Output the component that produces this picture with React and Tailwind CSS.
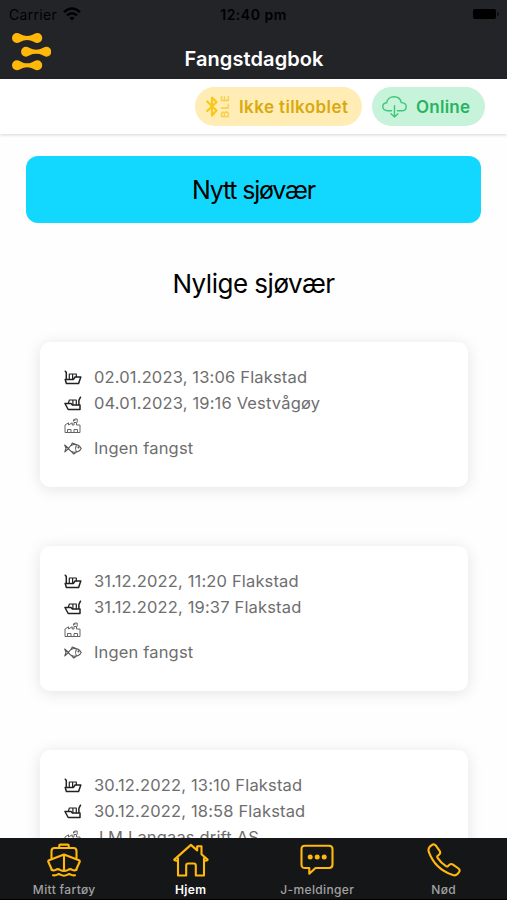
import React from 'react';

const trips = [
  { id: 1, departure: '02.01.2023, 13:06 Flakstad', arrival: '04.01.2023, 19:16 Vestvågøy', buyer: '', fish: 'Ingen fangst' },
  { id: 2, departure: '31.12.2022, 11:20 Flakstad', arrival: '31.12.2022, 19:37 Flakstad', buyer: '', fish: 'Ingen fangst' },
  { id: 3, departure: '30.12.2022, 13:10 Flakstad', arrival: '30.12.2022, 18:58 Flakstad', buyer: 'J.M.Langaas drift AS', fish: '' },
];

function Logo() {
  return (
    <svg className="w-[39px] h-[38px]" viewBox="0 0 40 38" preserveAspectRatio="none" fill="#ffb70a">
      <path id="link" d="M5 0C7.500 0 9 1.800 12 2.600Q15.500 3.400 19 2.600C22 1.800 23.500 0 26 0A5 5 0 0 1 26 10C23.500 10 22 8.200 19 7.400Q15.500 6.600 12 7.400C9 8.200 7.500 10 5 10A5 5 0 0 1 5 0Z" />
      <use href="#link" x="9.300" y="13.700" />
      <use href="#link" x="0" y="27.300" />
    </svg>
  );
}

function WifiIcon() {
  return (
    <svg className="w-[18px] h-[14px]" viewBox="0 0 18 14" fill="none" stroke="#000" strokeWidth="2.500">
      <path d="M1 5.200Q9-2.200 17 5.200" />
      <path d="M4 8.400Q9 4 14 8.400" />
      <path d="M6.400 10.900Q9 8.700 11.600 10.900L9 13.500Z" fill="#000" stroke="none" />
    </svg>
  );
}

function BluetoothIcon() {
  return (
    <svg className="w-[12px] h-[23px]" viewBox="0 0 12 23" fill="none" stroke="#f8c81c" strokeWidth="2.200" strokeLinejoin="round" strokeLinecap="round">
      <path d="M1.200 6.500L10.500 15.500L6 20.500V2.500L10.500 7L1.200 16" />
    </svg>
  );
}

function CloudIcon() {
  return (
    <svg className="w-[25px] h-[22px]" viewBox="0 0 25 22" fill="none" stroke="#3cc878" strokeWidth="1.400" strokeLinecap="round" strokeLinejoin="round">
      <path d="M9.500 14.800H5.500C2.700 14.800 .8 13 .8 10.600C.8 8.400 2.400 6.900 4.700 6.700C5.200 3.100 8.300 .8 12 .8C15.800 .8 18.600 3.100 19.300 6.600C22.200 6.700 24.200 8.300 24.200 10.700C24.200 13.200 22.200 14.800 19.600 14.800H15.500" />
      <path d="M12.500 9.800V21M9 17.800L12.500 21L16 17.800" />
    </svg>
  );
}

function DepartIcon() {
  return (
    <svg className="w-[18px] h-[15px]" viewBox="0 0 18 15" fill="none" stroke="#222" strokeWidth="1.200" strokeLinejoin="round" strokeLinecap="round">
      <path d="M1.300 1.200L2.300 2.500V9.500M1.200 9.500H9.300L11 7H16.800L14.600 13.500H2.400L1.200 9.500Z" strokeWidth="1.500" />
      <path d="M5.300 9V4H12.300V7M8.600 4V9" />
    </svg>
  );
}

function ArriveIcon() {
  return (
    <svg className="w-[18px] h-[15px]" viewBox="0 0 18 15" fill="none" stroke="#222" strokeWidth="1.200" strokeLinejoin="round" strokeLinecap="round">
      <path d="M1 7.500H7L8.600 9.100H16V13.500H4.200L1 7.500ZM14.900 9.100V4.300L16.500 1.200" strokeWidth="1.500" />
      <path d="M4.300 7.300L5.400 4H12.300V8.800M8.900 4V8.800" />
    </svg>
  );
}

function FactoryIcon() {
  return (
    <svg className="w-[17px] h-[16px]" viewBox="0 0 17 16" fill="none" stroke="#666" strokeWidth="1" strokeLinejoin="round">
      <path d="M1 14.500V7L4.500 4.800V7L8.200 4.800V7H10V4.500H12.500V7H16V14.500H1Z" />
      <path d="M9.500 3.500V1.700H11M10.800 3V1H13.200V4.500M3.500 14.500V11.500H7V14.500M10 14.500V11.500H13.500V14.500" />
    </svg>
  );
}

function FishIcon() {
  return (
    <svg className="w-[18px] h-[13px]" viewBox="0 0 18 13" fill="none" stroke="#555" strokeWidth="1.100" strokeLinejoin="round" strokeLinecap="round">
      <path d="M4.500 6.500C7 1.500 14.500 1 17.200 6.500C14.500 11.600 7 11.300 4.500 6.500L.8 9.900L2 6.300L.7 3L4.500 6.500Z" />
      <path d="M7.300 3L8.300 1.100L11.500 2.300M8 10.200L9.700 12L11.500 10.800M12.300 3.200Q10.800 6.400 12.300 9.800" />
      <circle cx="14.500" cy="5.400" r=".5" fill="#555" />
    </svg>
  );
}

function ShipIcon() {
  return (
    <svg className="w-[34px] h-[34px]" viewBox="0 0 34 34" fill="none" stroke="#ffb80e" strokeWidth="2.100" strokeLinejoin="round" strokeLinecap="round">
      <path d="M12.300 4.800V2.600Q12.300 1.600 13.300 1.600H20.700Q21.700 1.600 21.700 2.600V4.800M4.500 15V8Q4.500 5 7.500 5H26.500Q29.500 5 29.500 8V15" />
      <path d="M5 27L1.300 18.800Q1 17.600 2 17.200L17 11.500L32 17.200Q33 17.600 32.700 18.800L29 27" />
      <path d="M17 12V26.500M4.500 26.800Q6.500 28 8.700 26.800Q10.800 25.400 13 26.800Q17 29 21 26.800Q23.200 25.400 25.300 26.800Q27.500 28 29.500 26.800" />
      <path d="M6 32.200Q8.700 32.700 10.500 31.500Q12 30.700 13.500 31.700Q17 33.700 20.500 31.700Q22 30.700 23.500 31.500Q25.300 32.700 28 32.200" />
    </svg>
  );
}

function HomeIcon() {
  return (
    <svg className="w-[36px] h-[34px]" viewBox="0 0 36 34" fill="none" stroke="#ffb80e" strokeWidth="2.100" strokeLinejoin="round">
      <path d="M5 14.500V32.500H13.200V22.500Q13.200 20.500 15.200 20.500H20.800Q22.800 20.500 22.800 22.500V32.500H31V14.500" />
      <path d="M5 18L1.500 17.300L1.300 16.600L17.900 1.900L24.200 7.400V3.200H28.500V11.300L34.600 16.600L34.300 17.300L31 18" />
    </svg>
  );
}

function MessageIcon() {
  return (
    <svg className="w-[34px] h-[32px]" viewBox="0 0 34 32" fill="none" stroke="#ffb80e" strokeWidth="2.100" strokeLinejoin="round">
      <path d="M5 1.700H29Q32.500 1.700 32.500 5.200V20.500Q32.500 24 29 24H15.500L9.300 29.700V24H5Q1.500 24 1.500 20.500V5.200Q1.500 1.700 5 1.700Z" />
      <g fill="#ffb80e" stroke="none">
        <circle cx="10.200" cy="13" r="2.500" />
        <circle cx="17.200" cy="13" r="2.500" />
        <circle cx="24.200" cy="13" r="2.500" />
      </g>
    </svg>
  );
}

function PhoneIcon() {
  return (
    <svg className="w-[34px] h-[34px]" viewBox="0 0 34 34" fill="none" stroke="#ffb80e" strokeWidth="2.100" strokeLinejoin="round">
      <path d="M2.800 3.700L5.500 1.600Q7.500 .9 8.900 2.700L12.800 8.200Q13.900 10.200 12 11.700L10.500 13Q9.900 13.800 10.600 14.900Q14 20 19 23.200Q20.100 23.900 20.900 23.200L22.700 21.500Q24.200 20.500 26 21.600L31.500 25.500Q33.300 27 32.200 28.800L30.200 31.300Q28.700 32.900 25.900 32.100Q8 26.300 1.700 8.700Q1 5.500 2.800 3.700Z" />
    </svg>
  );
}

function TripRow({ icon, text, height }) {
  return (
    <div className={`flex items-center ${height}`}>
      <div className="w-[30px] flex shrink-0 items-center pt-px">{icon}</div>
      <span className="text-[16.500px] leading-5 tracking-[0.160px] text-[#6e6e6e]">{text}</span>
    </div>
  );
}

function TripCard({ trip }) {
  return (
    <div className="h-[145px] shrink-0 rounded-[10px] bg-white pt-[22px] pl-6 shadow-[0_2px_16px_rgba(0,0,0,0.110)]">
      <TripRow icon={<DepartIcon />} text={trip.departure} height="h-[26px]" />
      <TripRow icon={<ArriveIcon />} text={trip.arrival} height="h-[26px]" />
      <TripRow icon={<FactoryIcon />} text={trip.buyer} height={trip.buyer ? 'h-[26px]' : 'h-[19px]'} />
      <TripRow icon={<FishIcon />} text={trip.fish} height="h-[26px]" />
    </div>
  );
}

const tabs = [
  { label: 'Mitt fartøy', icon: <ShipIcon /> },
  { label: 'Hjem', icon: <HomeIcon />, active: true },
  { label: 'J-meldinger', icon: <MessageIcon /> },
  { label: 'Nød', icon: <PhoneIcon /> },
];

export default function App() {
  return (
    <div className="flex h-screen w-full flex-col overflow-hidden bg-white font-['Inter',sans-serif]">
      {/* Header */}
      <header className="flex h-[79px] shrink-0 flex-col bg-[#232428]">
        <div className="grid h-[28px] grid-cols-3 items-center text-black">
          <div className="flex items-center gap-[6px] pl-[9px]">
            <span className="text-[14px] tracking-[0.300px]">Carrier</span>
            <WifiIcon />
          </div>
          <span className="text-center text-[14px] font-semibold tracking-[0.500px]">12:40 pm</span>
          <div className="flex items-center justify-end gap-px pr-[8px]">
            <div className="h-[10px] w-[23px] rounded-[2px] bg-black" />
            <div className="h-1 w-[2px] rounded-r bg-black/60" />
          </div>
        </div>
        <div className="grid h-[51px] grid-cols-[100px_1fr_100px] items-start">
          <div className="pt-[5px] pl-[12px]"><Logo /></div>
          <h1 className="pt-[17px] pl-px text-center text-[20px] leading-7 font-semibold tracking-[0.100px] text-white">Fangstdagbok</h1>
        </div>
      </header>

      {/* Connection status */}
      <div className="z-10 flex h-[55px] shrink-0 items-center justify-end gap-[10px] bg-white pr-[22px] shadow-[0_1px_3px_rgba(0,0,0,0.160)]">
        <div className="flex h-[39px] w-[167px] items-center rounded-full bg-[#ffedb5] pl-[11px]">
          <BluetoothIcon />
          <span className="ml-[1px] w-[12px] rotate-180 text-center text-[11px] leading-3 font-semibold tracking-[1.300px] text-[#f8cf45] [writing-mode:vertical-rl]">BLE</span>
          <span className="ml-2 pt-[2px] text-[17px] font-semibold tracking-[0.400px] whitespace-nowrap text-[#d9a90f]">Ikke tilkoblet</span>
        </div>
        <div className="flex h-[39px] w-[113px] items-center rounded-full bg-[#c6f3d9] pl-[10px]">
          <CloudIcon />
          <span className="ml-[9px] pt-[2px] text-[17px] font-semibold tracking-[0.250px] text-[#27b462]">Online</span>
        </div>
      </div>

      {/* Trips */}
      <main className="flex min-h-0 flex-1 flex-col overflow-hidden bg-[#fefefe] pt-[22px]">
        <button className="mx-[26px] h-[67px] shrink-0 rounded-[12px] bg-[#12d8ff] pt-[2px] text-[25px] tracking-[-1.200px] text-black">Nytt sjøvær</button>
        <h2 className="mt-[43px] h-[36px] shrink-0 text-center text-[26px] leading-9 tracking-[-0.500px] text-black">Nylige sjøvær</h2>
        <div className="mt-[40px] flex flex-col gap-[59px] pr-[39px] pl-[40px]">
          {trips.map((trip) => (
            <TripCard key={trip.id} trip={trip} />
          ))}
        </div>
      </main>

      {/* Tab bar */}
      <nav className="z-10 grid h-[62px] shrink-0 grid-cols-4 border-b border-black bg-[#151618] pl-px">
        {tabs.map((tab) => (
          <div key={tab.label} className="flex flex-col items-center">
            <div className="flex h-[44px] items-center">{tab.icon}</div>
            <span className={`text-[12px] leading-4 tracking-[0.350px] ${tab.active ? 'font-semibold text-white' : 'font-medium text-[#a2a2a2]'}`}>{tab.label}</span>
          </div>
        ))}
      </nav>
    </div>
  );
}
